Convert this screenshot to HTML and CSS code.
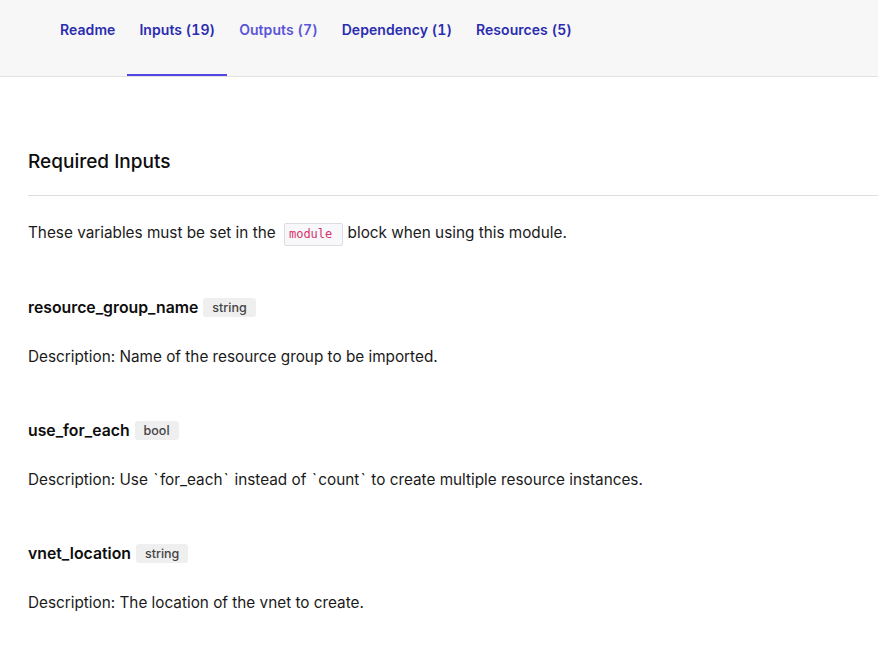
FILE: index.html
```html
<!DOCTYPE html>
<html lang="en">
<head>
<meta charset="utf-8">
<title>Inputs</title>
<link rel="stylesheet" href="styles.css">
</head>
<body>
<header class="tabbar">
  <nav class="tabs">
    <a class="tab">Readme</a>
    <a class="tab active">Inputs (19)</a>
    <a class="tab hover">Outputs (7)</a>
    <a class="tab">Dependency (1)</a>
    <a class="tab">Resources (5)</a>
  </nav>
</header>
<main class="content">
  <h2 class="section-title">Required Inputs</h2>
  <p class="intro">These variables must be set in the <code class="code">module</code> block when using this module.</p>

  <div class="input">
    <h3 class="input-name">resource_group_name <span class="badge">string</span></h3>
    <p class="desc">Description: Name of the resource group to be imported.</p>
  </div>
  <div class="input">
    <h3 class="input-name">use_for_each <span class="badge">bool</span></h3>
    <p class="desc">Description: Use <span class="tick">`</span>for_each<span class="tick">`</span> instead of <span class="tick">`</span>count<span class="tick">`</span> to create multiple resource instances.</p>
  </div>
  <div class="input">
    <h3 class="input-name">vnet_location <span class="badge">string</span></h3>
    <p class="desc">Description: The location of the vnet to create.</p>
  </div>
</main>
</body>
</html>
```

FILE: styles.css
```css
html, body {
  margin: 0;
  padding: 0;
  background: #ffffff;
  font-family: Inter, "Noto Sans", "Liberation Sans", sans-serif;
  color: #111;
}

.tabbar {
  background: #f7f7f7;
  border-bottom: 1px solid #e2e2e2;
  height: 76px;
}

.tabs {
  display: flex;
  padding-left: 48px;
  height: 100%;
}

.tab {
  box-sizing: border-box;
  height: 76px;
  padding: 20px 12px 0;
  font-size: 14px;
  line-height: 20px;
  font-weight: 600;
  font-feature-settings: "tnum";
  letter-spacing: 0.06px;
  color: #2b2cb0;
  border-bottom: 2px solid transparent;
  cursor: pointer;
}

.tab.active {
  border-bottom-color: #4f46e5;
}

.tab.hover {
  color: #5a55d9;
}

.content {
  padding: 0 0 0 28px;
}

.section-title {
  margin: 71px 0 0;
  padding-bottom: 20px;
  border-bottom: 1px solid #dedede;
  font-size: 19px;
  line-height: 27px;
  font-weight: 500;
  color: #0d0d0d;
}

.intro {
  margin: 25px 0 0;
  font-size: 15.3px;
  line-height: 24px;
  color: #1a1a1a;
}

.code {
  display: inline-block;
  font-family: "DejaVu Sans Mono", "Liberation Mono", monospace;
  font-size: 12px;
  line-height: 17px;
  color: #d6336c;
  background: #f8f8fa;
  border: 1px solid #dcdce2;
  border-radius: 2px;
  padding: 2px 10px 2px 4px;
  margin: 0 0 0 4px;
  vertical-align: 0px;
}

.input {
  margin-top: 50px;
}

.input-name {
  margin: 0;
  font-size: 15.8px;
  line-height: 24px;
  font-weight: 600;
  color: #0d0d0d;
}

.badge {
  display: inline-block;
  margin-left: 1px;
  padding: 0 9px;
  font-size: 12.5px;
  line-height: 19px;
  font-weight: 500;
  color: #444;
  background: #efefef;
  border-radius: 3px;
  vertical-align: 1px;
}

.desc {
  margin: 25px 0 0;
  font-size: 15.3px;
  line-height: 24px;
  color: #1a1a1a;
}

.tick {
  padding: 0 1.4px;
}
```
